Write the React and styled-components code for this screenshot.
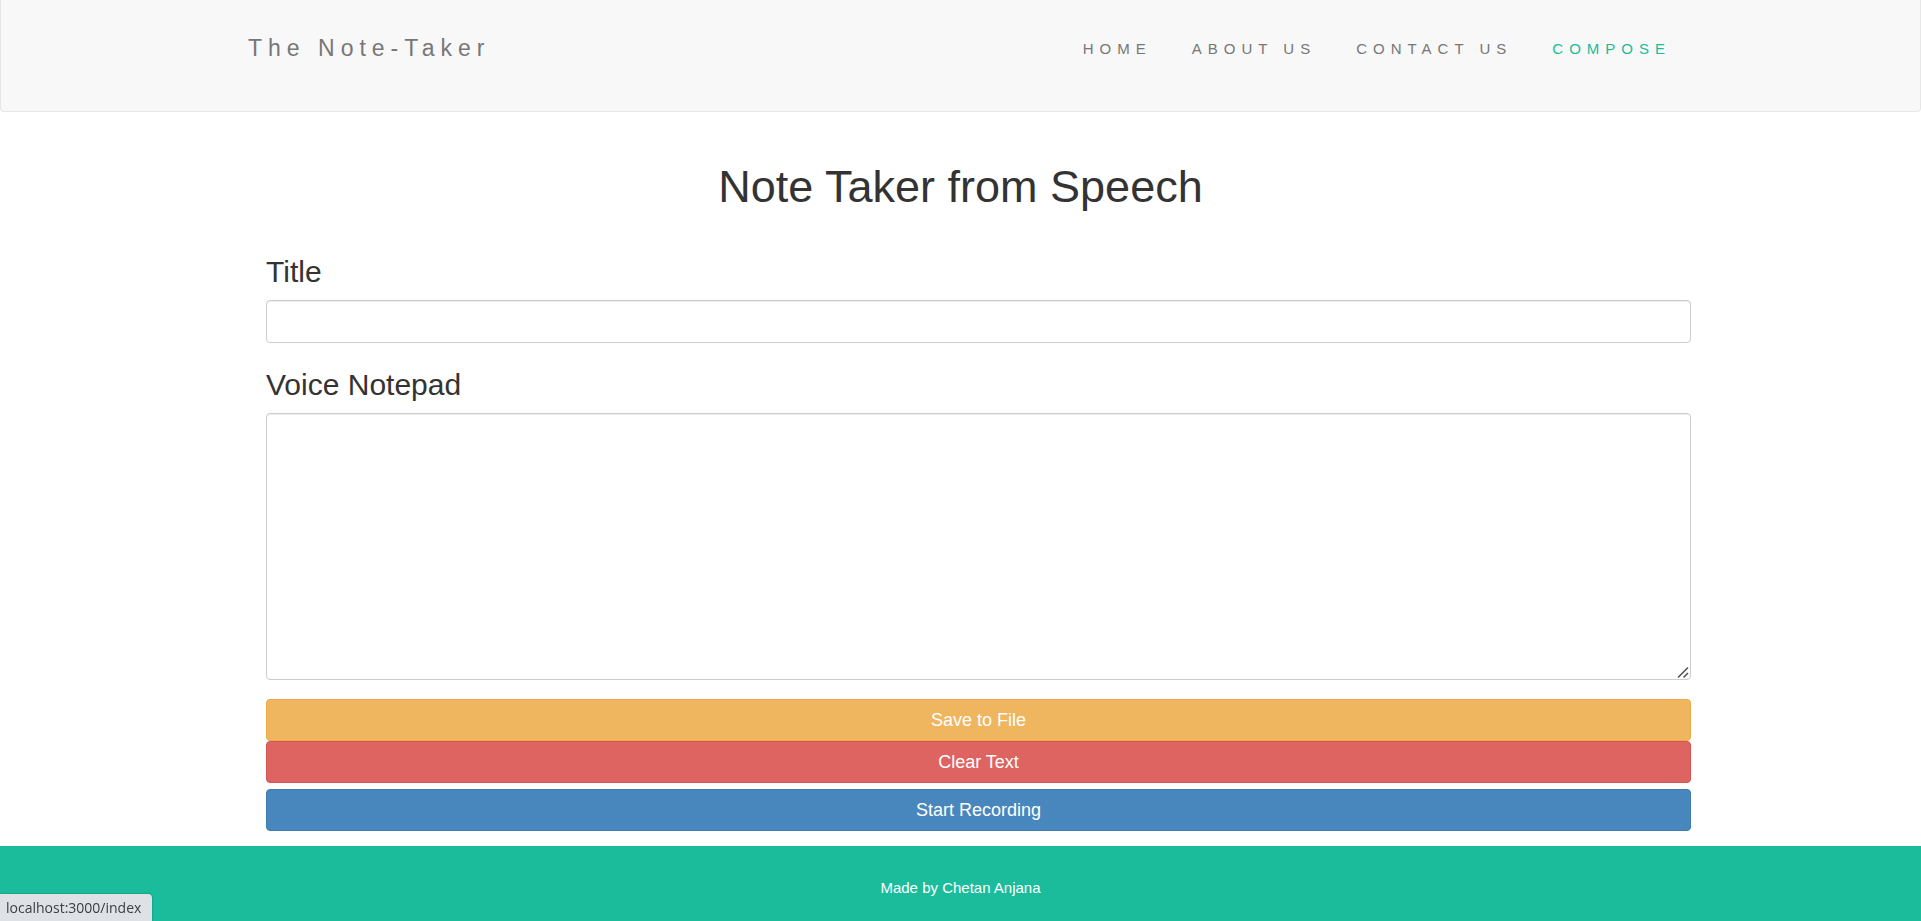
import React from "react";
import styled, { createGlobalStyle } from "styled-components";

const GlobalStyle = createGlobalStyle`
  *, *::before, *::after { box-sizing: border-box; }
  body {
    margin: 0;
    background: #fff;
    color: #333;
    font-family: "Liberation Sans", Arial, sans-serif;
  }
`;

const Page = styled.div`
  display: flex;
  flex-direction: column;
  min-height: 100vh;
`;

const Navbar = styled.nav`
  display: flex;
  align-items: flex-start;
  justify-content: space-between;
  padding: 31px 229px 44px;
  background: #f8f8f8;
  border: 1px solid #e7e7e7;
  border-top: 0;
  border-radius: 0 0 4px 4px;
`;

const Brand = styled.a`
  padding-left: 18px;
  color: #777;
  font-size: 23px;
  line-height: 34px;
  letter-spacing: 6px;
  text-decoration: none;
`;

const Menu = styled.ul`
  display: flex;
  gap: 40px;
  margin: 0;
  padding: 0 20px 0 0;
  list-style: none;
`;

const MenuLink = styled.a`
  display: block;
  color: ${({ $active }) => ($active ? "#1abc9c" : "#777")};
  font-size: 15px;
  line-height: 36px;
  letter-spacing: 6px;
  text-decoration: none;
  text-transform: uppercase;
`;

const Main = styled.main`
  padding: 50px 230px 15px;
`;

const Heading = styled.h1`
  margin: 0 0 43px;
  font-size: 45px;
  font-weight: 400;
  line-height: 50px;
  text-align: center;
`;

const Form = styled.form`
  display: flex;
  flex-direction: column;
  padding-left: 36px;
`;

const Label = styled.label`
  margin-bottom: 11px;
  font-size: 30px;
  line-height: 34px;
`;

const TextInput = styled.input`
  width: 100%;
  height: 43px;
  margin: 0 0 25px;
  padding: 6px 12px;
  border: 1px solid #ccc;
  border-radius: 4px;
  background: #fff;
  color: #555;
  font: inherit;
  font-size: 18px;
  box-shadow: inset 0 1px 1px rgba(0, 0, 0, 0.075);
`;

const NotepadBox = styled.div`
  position: relative;
  margin-bottom: 19px;
`;

const TextArea = styled(TextInput).attrs({ as: "textarea" })`
  display: block;
  height: 267px;
  margin-bottom: 0;
  resize: vertical;

  &::-webkit-resizer {
    background: transparent;
  }
`;

const ResizeGrip = styled.svg`
  position: absolute;
  right: 1px;
  bottom: 1px;
  pointer-events: none;
`;

const palette = {
  warning: ["#f0b55f", "#eeaa48"],
  danger: ["#dd6460", "#d5544f"],
  primary: ["#4887bd", "#3f7cb0"],
};

const Button = styled.button`
  height: 42px;
  padding: 0 12px;
  border: 1px solid ${({ $tone }) => palette[$tone][1]};
  border-radius: 4px;
  background: ${({ $tone }) => palette[$tone][0]};
  color: #fff;
  font: inherit;
  font-size: 18px;
  cursor: pointer;
`;

const RecordButton = styled(Button)`
  margin-top: 6px;
`;

const Footer = styled.footer`
  flex: 1;
  padding: 32px 0 23px;
  background: #1abc9c;
  color: #fff;
  font-size: 15px;
  line-height: 20px;
  text-align: center;
`;

const StatusBubble = styled.div`
  position: fixed;
  left: 0;
  bottom: 0;
  padding: 4px 11px 3px 6px;
  border-radius: 0 4px 0 0;
  background: #dee1e6;
  box-shadow: 0 0 2px rgba(0, 0, 0, 0.4);
  color: #3c4043;
  font-family: "Open Sans", "Noto Sans", sans-serif;
  font-size: 14px;
  line-height: 20px;
`;

const links = ["Home", "About us", "Contact us", "Compose"];

export default function App() {
  return (
    <Page>
      <GlobalStyle />
      <Navbar>
        <Brand href="#">The Note-Taker</Brand>
        <Menu>
          {links.map((name) => (
            <li key={name}>
              <MenuLink href="#" $active={name === "Compose"}>
                {name}
              </MenuLink>
            </li>
          ))}
        </Menu>
      </Navbar>
      <Main>
        <Heading>Note Taker from Speech</Heading>
        <Form onSubmit={(event) => event.preventDefault()}>
          <Label htmlFor="title">Title</Label>
          <TextInput id="title" type="text" />
          <Label htmlFor="notepad">Voice Notepad</Label>
          <NotepadBox>
            <TextArea id="notepad" />
            <ResizeGrip width="14" height="14" viewBox="0 0 14 14" aria-hidden="true">
              <path d="M2 12.5 12 2.5M7.5 12.5 12 8" fill="none" stroke="#555" strokeWidth="1.6" />
            </ResizeGrip>
          </NotepadBox>
          <Button type="submit" $tone="warning">Save to File</Button>
          <Button type="reset" $tone="danger">Clear Text</Button>
          <RecordButton type="button" $tone="primary">Start Recording</RecordButton>
        </Form>
      </Main>
      <Footer>Made by Chetan Anjana</Footer>
      <StatusBubble>localhost:3000/index</StatusBubble>
    </Page>
  );
}
